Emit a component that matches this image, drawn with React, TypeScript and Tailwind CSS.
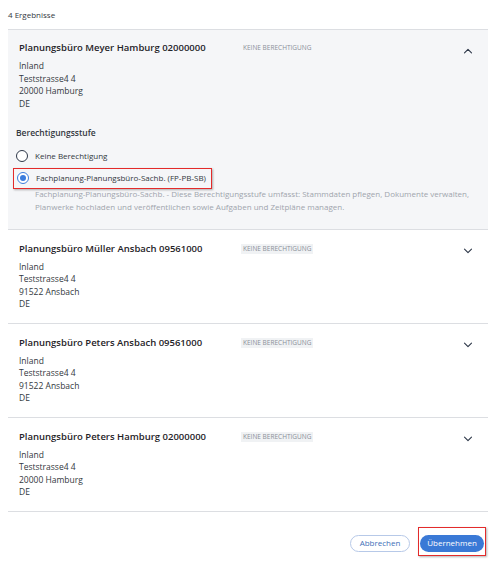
import React from "react";

// --- Types ---
interface Office {
  name: string;
  street: string;
  city: string;
  expanded?: boolean;
}

const OFFICES: Office[] = [
  { name: "Planungsbüro Meyer Hamburg 02000000", street: "Teststrasse4 4", city: "20000 Hamburg", expanded: true },
  { name: "Planungsbüro Müller Ansbach 09561000", street: "Teststrasse4 4", city: "91522 Ansbach" },
  { name: "Planungsbüro Peters Ansbach 09561000", street: "Teststrasse4 4", city: "91522 Ansbach" },
  { name: "Planungsbüro Peters Hamburg 02000000", street: "Teststrasse4 4", city: "20000 Hamburg" },
];

const Chevron = ({ up }: { up?: boolean }) => (
  <svg width="10" height="6" viewBox="0 0 10 6" className={up ? "rotate-180" : ""}>
    <path d="M1.5 1.2l3.5 3.5 3.5-3.5" fill="none" stroke="#2d3748" strokeWidth="1.1" strokeLinecap="round" strokeLinejoin="round" />
  </svg>
);

const Badge = ({ muted }: { muted?: boolean }) => (
  <span
    className={`text-[6.5px] leading-[10px] uppercase text-[#8a8f98] px-[2px] ${muted ? "" : "bg-[#f0f2f4]"}`}
  >
    Keine Berechtigung
  </span>
);

function OfficeCard({ office }: { office: Office }) {
  return (
    <div className={`border-b border-[#dcdee2] px-[11px] ${office.expanded ? "bg-[#f5f6f8] pb-[16px]" : "bg-white pb-[12px]"}`}>
      <div className={`flex items-start ${office.expanded ? "pt-[10px]" : "pt-[11px]"}`}>
        <div className="w-[222px] text-[9.5px] font-semibold text-[#1f2328] leading-[16px]">{office.name}</div>
        <div className="flex-1 flex pt-[3px]">
          <Badge muted={office.expanded} />
        </div>
        <div className={`w-[14px] flex ${office.expanded ? "pt-[8px]" : "pt-[7px]"}`}>
          <Chevron up={office.expanded} />
        </div>
      </div>
      <div className="mt-[4px] text-[8.5px] leading-[12.5px] text-[#333840]">
        <div>Inland</div>
        <div>{office.street}</div>
        <div>{office.city}</div>
        <div>DE</div>
      </div>

      {office.expanded && (
        <div className="mt-[17px] -ml-[3px]">
          <div className="text-[8.5px] font-semibold text-[#333840] leading-[12px]">Berechtigungsstufe</div>
          <div className="mt-[10px] flex items-center gap-[7px] h-[14px]">
            <span className="w-[12px] h-[12px] rounded-full border-[1.5px] border-[#2d3748] bg-white" />
            <span className="text-[8px] text-[#333840]">Keine Berechtigung</span>
          </div>
          <div className="mt-[4px] -ml-[3px] inline-flex items-center gap-[7px] h-[21px] pl-[3px] pr-[5px] border-[1.5px] border-[#e32b2b] shadow-[1px_1px_2px_rgba(0,0,0,0.3)]">
            <span className="w-[12px] h-[12px] rounded-full border-[1.5px] border-[#3b7ddd] bg-white flex items-center justify-center">
              <span className="w-[6px] h-[6px] rounded-full bg-[#3b7ddd]" />
            </span>
            <span className="text-[8px] text-[#333840]">Fachplanung-Planungsbüro-Sachb. (FP-PB-SB)</span>
          </div>
          <div className="ml-[19px] -mt-[2px] text-[8px] leading-[13px] text-[#a0a5ad]">
            Fachplanung-Planungsbüro-Sachb. - Diese Berechtigungsstufe umfasst: Stammdaten pflegen, Dokumente verwalten,
            <br />
            Planwerke hochladen und veröffentlichen sowie Aufgaben und Zeitpläne managen.
          </div>
        </div>
      )}
    </div>
  );
}

export default function App() {
  return (
    <div className="bg-white min-h-screen font-['Open_Sans',sans-serif] px-[8px] w-[496px]">
      <div className="h-[29px] flex items-center text-[8px] text-[#333840]">4 Ergebnisse</div>
      <div className="border-t border-[#dcdee2]">
        {OFFICES.map((o, i) => (
          <OfficeCard key={i} office={o} />
        ))}
      </div>
      <div className="flex justify-end items-start gap-[8px] pt-[15px] pr-[2px]">
        <button className="mt-[8px] h-[17px] w-[60px] rounded-full border border-[#b7c9e8] text-[8px] text-[#3e6fb8] bg-white">
          Abbrechen
        </button>
        <div className="flex pt-[7px] pb-[3px] px-[1px] border-[1.5px] border-[#e32b2b] shadow-[1px_1px_2px_rgba(0,0,0,0.3)]">
          <button className="h-[17px] w-[64px] rounded-full bg-[#3a79d6] text-[8px] text-white">Übernehmen</button>
        </div>
      </div>
    </div>
  );
}
